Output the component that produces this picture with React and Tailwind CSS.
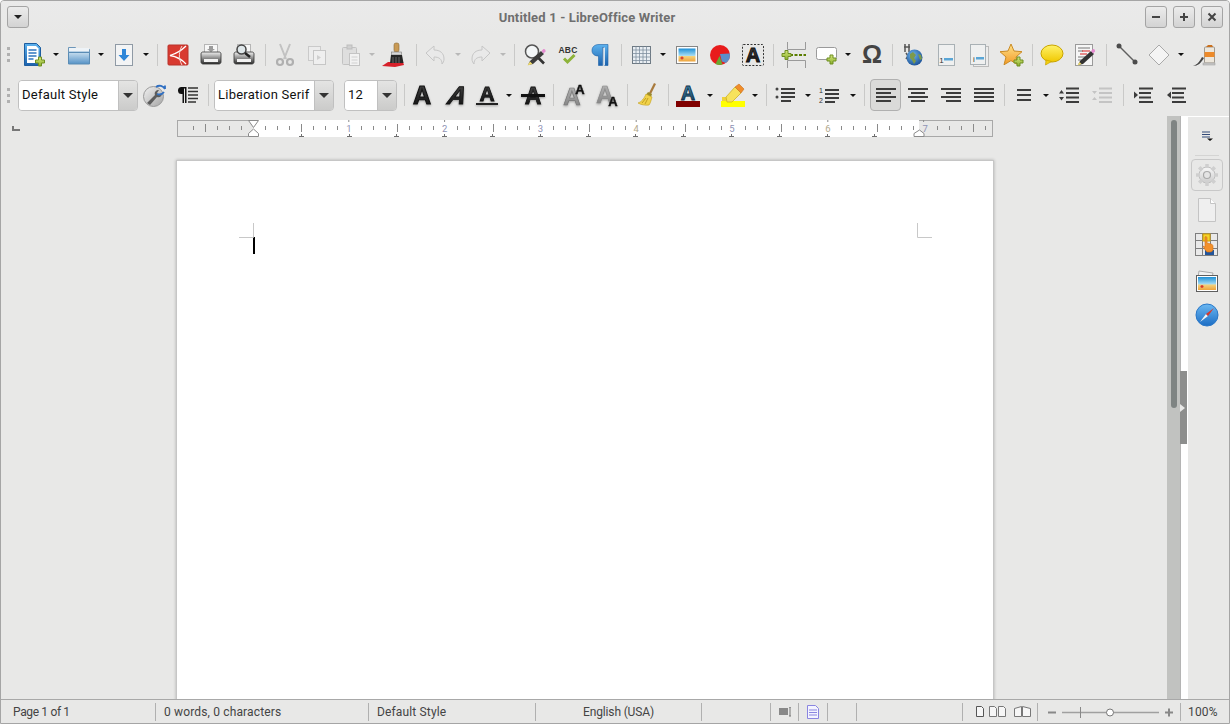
import React from "react";

const S = ({ children, w = 24, h = 24, className = "" }) => (
  <svg width={w} height={h} viewBox={`0 0 ${w} ${h}`} className={`shrink-0 overflow-visible ${className}`}>{children}</svg>
);

const Defs = () => (
  <svg className="absolute w-0 h-0">
    <defs>
      <linearGradient id="gBlue" x1="0" y1="0" x2="0" y2="1"><stop offset="0" stopColor="#5db2ee"/><stop offset="1" stopColor="#1b62ad"/></linearGradient>
      <linearGradient id="gFolder" x1="0" y1="0" x2="0" y2="1"><stop offset="0" stopColor="#c5dcee"/><stop offset="1" stopColor="#5592c6"/></linearGradient>
      <linearGradient id="gGreen" x1="0" y1="0" x2="0" y2="1"><stop offset="0" stopColor="#d4e67a"/><stop offset="1" stopColor="#8bb02d"/></linearGradient>
      <linearGradient id="gPrint" x1="0" y1="0" x2="0" y2="1"><stop offset="0" stopColor="#f2f2f2"/><stop offset="0.5" stopColor="#8e8e8e"/><stop offset="1" stopColor="#2d2d2d"/></linearGradient>
      <linearGradient id="gSky" x1="0" y1="0" x2="0" y2="1"><stop offset="0" stopColor="#1d8fd6"/><stop offset="0.55" stopColor="#a6dcf2"/><stop offset="0.6" stopColor="#f4d27c"/><stop offset="1" stopColor="#eda33c"/></linearGradient>
      <linearGradient id="gA" x1="0" y1="0" x2="0" y2="1"><stop offset="0" stopColor="#4a4a4a"/><stop offset="1" stopColor="#0c0c0c"/></linearGradient>
      <linearGradient id="gAG" x1="0" y1="0" x2="0" y2="1"><stop offset="0" stopColor="#bcbcbc"/><stop offset="1" stopColor="#7c7c7c"/></linearGradient>
      <linearGradient id="gAB" x1="0" y1="0" x2="0" y2="1"><stop offset="0" stopColor="#4fa3c9"/><stop offset="1" stopColor="#0f2f4a"/></linearGradient>
      <linearGradient id="gYel" x1="0" y1="0" x2="0" y2="1"><stop offset="0" stopColor="#fff26a"/><stop offset="1" stopColor="#f0c800"/></linearGradient>
      <linearGradient id="gStar" x1="0" y1="0" x2="0" y2="1"><stop offset="0" stopColor="#ffe28a"/><stop offset="1" stopColor="#f29a26"/></linearGradient>
      <radialGradient id="gGlobe" cx="0.4" cy="0.35" r="0.7"><stop offset="0" stopColor="#6fb4ea"/><stop offset="1" stopColor="#1a4f95"/></radialGradient>
      <linearGradient id="gComp" x1="0" y1="0" x2="0" y2="1"><stop offset="0" stopColor="#6bb8f2"/><stop offset="1" stopColor="#1c6dc4"/></linearGradient>
      <linearGradient id="gGear" x1="0" y1="0" x2="0" y2="1"><stop offset="0" stopColor="#f5f5f5"/><stop offset="1" stopColor="#cfcfcf"/></linearGradient>
      <linearGradient id="gWr" x1="0" y1="0" x2="1" y2="1"><stop offset="0" stopColor="#f2f2f2"/><stop offset="1" stopColor="#a4a4a4"/></linearGradient>
    </defs>
  </svg>
);

const Plus = ({ x = 14, y = 14 }) => (
  <path transform={`translate(${x} ${y})`} d="M3 0h3v3h3v3H6v3H3V6H0V3h3z" fill="url(#gGreen)" stroke="#6f8f22" strokeWidth="1" />
);

const NewDoc = () => (
  <S>
    <path d="M2.500 .5h12l4 4v18h-16z" fill="url(#gBlue)" stroke="#1d5d9f" />
    <path d="M5 3h9l2.500 2.500V20H5z" fill="#fff" />
    <path d="M6.500 7h8M6.500 10h8M6.500 13h8M6.500 16h5" stroke="#2f76bf" strokeWidth="1.400" />
    <Plus x={13.500} y={14} />
  </S>
);
const Folder = () => (
  <S>
    <path d="M1.500 4.500h7l2 2h12v14h-21z" fill="#b9d1e5" stroke="#6d96b9" />
    <rect x="2" y="5" width="20" height="3" fill="#eef3f7" />
    <path d="M1.500 9.500h21v11.500h-21z" fill="url(#gFolder)" stroke="#5a8cb5" />
  </S>
);
const Save = () => (
  <S>
    <rect x="3.500" y="1.500" width="17" height="21" fill="#f3f4f5" stroke="#8f9aa5" />
    <path d="M10 6h4v6h3.500L12 18l-5.500-6H10z" fill="#2e86d8" />
  </S>
);
const Pdf = () => (
  <S>
    <rect x="2" y="2" width="20" height="20" rx="1" fill="#d83a30" stroke="#b8322a" />
    <path d="M20 3C15 8 9 11 4 12.500c6 1 12 4 16 8.500" fill="none" stroke="#fff" strokeWidth="1.300" />
    <path d="M16 3C13 8 12 15 16 22" fill="none" stroke="#f6d5d2" strokeWidth="1" />
  </S>
);
const Printer = ({ mag }) => (
  <S>
    <rect x="5.500" y="1.500" width="13" height="10" fill="#f7f7f7" stroke="#b5b5b5" />
    {!mag && <path d="M10 3h4v3h2l-4 3-4-3h2z" fill="#9a9a9a" />}
    <path d="M2 11c0-1.500 1-2 2-2h16c1 0 2 .5 2 2v8c0 1-1 2-2 2H4c-1 0-2-1-2-2z" fill="url(#gPrint)" stroke="#333" strokeWidth=".8" />
    <rect x="5" y="16" width="14" height="3" fill="#f2f2f2" />
    {mag && <>
      <circle cx="9.500" cy="6.500" r="4.500" fill="#dfe7ea" stroke="#444" strokeWidth="1.500" />
      <path d="M13 10l5 4" stroke="#222" strokeWidth="2.400" />
    </>}
  </S>
);
const Cut = () => (
  <S>
    <g stroke="#c2c2c2" fill="none">
      <path d="M7 1l6 15M17 1l-6 15" strokeWidth="2" />
      <circle cx="7" cy="19" r="3" strokeWidth="2.200" stroke="#b0b0b0" />
      <circle cx="17" cy="19" r="3" strokeWidth="2.200" stroke="#b0b0b0" />
    </g>
  </S>
);
const Copy = () => (
  <S>
    <rect x="3.500" y="3.500" width="12" height="14" fill="#ececec" stroke="#cacaca" />
    <rect x="8.500" y="7.500" width="12" height="14" fill="#efefef" stroke="#c6c6c6" />
    <path d="M12 12l4 2.500-4 2.500z" fill="#cfcfcf" />
  </S>
);
const Paste = () => (
  <S>
    <rect x="3.500" y="4.500" width="14" height="17" rx="1" fill="#dedede" stroke="#c2c2c2" />
    <rect x="8" y="2" width="5" height="4" fill="#d0d0d0" stroke="#bdbdbd" />
    <rect x="10.500" y="10.500" width="10" height="12" fill="#f2f2f2" stroke="#c4c4c4" />
    <path d="M12.500 14h6M12.500 17h6M12.500 20h6" stroke="#d0d0d0" />
  </S>
);
const Brush = () => (
  <S>
    <path d="M-1 23l6-4 15 0 1 3-9 2z" fill="#d6202a" />
    <rect x="11" y="0" width="5" height="9" rx="2" fill="#c99a55" stroke="#8a6a35" strokeWidth=".6" />
    <rect x="8.500" y="9" width="10" height="3" fill="#d8d8d8" stroke="#777" strokeWidth=".6" />
    <path d="M8 12h11l1.500 8H7z" fill="#262626" />
    <path d="M10 14v6M13 14v6M16 14v6" stroke="#666" />
  </S>
);
const Undo = ({ flip }) => (
  <S className={flip ? "-scale-x-100" : ""}>
    <path d="M3 10l8-7v4c6 0 10 3 10 9 0 2-1 4-2 5 0-5-3-7-8-7v4z" fill="#e9e9e9" stroke="#c6c6c6" />
  </S>
);
const Find = () => (
  <S>
    <circle cx="9" cy="8.500" r="6.500" fill="#f3f6f7" stroke="#555" strokeWidth="1.500" />
    <path d="M14 13.500l7 7" stroke="#333" strokeWidth="2.600" />
    <path d="M5 22l2-4 11-10 3 3-11 10z" fill="#3b3b3b" />
    <path d="M18.500 8l2-2c1-.5 2.500 1 2 2.500l-2 2z" fill="#e48bd0" />
    <path d="M4.500 22.500l2.500-4 2.500 2.500z" fill="#f1dc6a" />
  </S>
);
const Spell = () => (
  <S>
    <text x="12" y="9.500" textAnchor="middle" fontFamily="Liberation Sans" fontWeight="700" fontSize="8.500" fill="#333" letterSpacing=".2">ABC</text>
    <path d="M8 15.500l3.500 3.500 7-7" fill="none" stroke="#8db33a" strokeWidth="3" />
  </S>
);
const Pilcrow = () => (
  <S>
    <path d="M19 1.500H10C5.500 1.500 3 4 3 7.500S5.500 13 9.500 13v9.500h4V4.500h1.500v18h4z" fill="url(#gBlue)" stroke="#1b5fa6" strokeWidth=".6" />
    <path d="M14.800 4.500h1v18h-1z" fill="#fff" />
  </S>
);
const TableI = () => (
  <S>
    <rect x="3.500" y="3.500" width="18" height="17" fill="#e9eef3" stroke="#6e7a84" />
    <path d="M3.500 7h18M3.500 10.500h18M3.500 14h18M3.500 17.500h18M7 3.500v17M10.500 3.500v17M14 3.500v17M17.500 3.500v17" stroke="#7f8f9f" strokeWidth=".8" />
  </S>
);
const Pic = () => (
  <S>
    <rect x="1.500" y="3.500" width="21" height="17" fill="#fff" stroke="#858585" />
    <rect x="3.500" y="5.500" width="17" height="13" fill="url(#gSky)" />
    <path d="M7 13.500v3M5.500 15h3" stroke="#d8392c" strokeWidth="1.300" />
  </S>
);
const Chart = () => (
  <S>
    <circle cx="12" cy="12" r="10" fill="#e81c1c" />
    <path d="M12 11l9.900 -.5a10 10 0 0 1-4 9.500l-4-1.500z" fill="#5b8fc9" />
    <path d="M11.500 13l3 8.600a10 10 0 0 1-7 -.5z" fill="#6aa833" />
  </S>
);
const BigA = ({ fill = "url(#gA)", size = 24, y = 20, stroke = "#111", italic = false, x = 12, sw = 0.9 }) => (
  <text x={x} y={y} textAnchor="middle" fontFamily="Liberation Sans" fontWeight="700" fontStyle={italic ? "italic" : "normal"} fontSize={size} fill={fill} stroke={stroke} strokeWidth={sw}>A</text>
);
const shadow = "drop-shadow-[0_1px_1px_rgba(0,0,0,0.3)]";
const TextBox = () => (
  <S>
    <rect x="1.500" y="1.500" width="21" height="21" rx="1" fill="none" stroke="#333" strokeDasharray="2 1.500" />
    <BigA size={20} y={19} />
  </S>
);
const PageBreak = () => (
  <S h={26}>
    <path d="M5.500 0v7.500h18V0M5.500 26v-7.500h18V26" fill="none" stroke="#9a9a9a" />
    <path d="M8 13h16" stroke="#5a7d00" strokeWidth="2" strokeDasharray="3 1.500" />
    <Plus x={0} y={8.500} />
  </S>
);
const Field = () => (
  <S>
    <rect x="2.500" y="4.500" width="20" height="12" rx="2" fill="#fff" stroke="#9a9a9a" />
    <Plus x={13} y={12} />
  </S>
);
const Omega = () => (
  <span className="font-['Liberation_Sans'] font-bold text-[25px] leading-none text-[#444]">Ω</span>
);
const Hyper = () => (
  <S>
    <path d="M4 1v8M8 1v8M3 4h6M5 10l4 6M9 10l-4 6" stroke="#555" strokeWidth="1.500" />
    <circle cx="13.500" cy="14.500" r="8" fill="url(#gGlobe)" />
    <path d="M9 11l3-2 3 3-2 3 2 3-2 3-2-4-2-2zM17 11l3 1 1 4-2 1z" fill="#7d9a4a" />
  </S>
);
const Note = ({ end }) => (
  <S>
    {end && <rect x="6.500" y="3.500" width="15" height="20" fill="#ececec" stroke="#bbb" />}
    <rect x={end ? 3.500 : 4.500} y={1.500} width={end ? 15 : 16} height={end ? 20 : 21} fill="#eff0f0" stroke="#a9b1b5" />
    <text x={end ? 7 : 7.500} y={end ? 19 : 20} textAnchor="middle" fontFamily="Liberation Sans" fontSize="8" fill="#333">{end ? "i" : "1"}</text>
    <rect x={end ? 9 : 10} y={end ? 14 : 15} width={end ? 8 : 9} height="2.500" fill="#5aa6d6" />
  </S>
);
const Star = () => (
  <S>
    <path d="M11 1l3 7 8 .7-6 5.300 2 7.800-7-4.200-7 4.200 2-7.800-6-5.300 8-.7z" fill="url(#gStar)" stroke="#c98a24" />
    <Plus x={14} y={14} />
  </S>
);
const Bubble = () => (
  <S>
    <ellipse cx="12" cy="10.500" rx="11" ry="8.500" fill="url(#gYel)" stroke="#c9a400" />
    <path d="M6 17l-.5 5 6-3.500z" fill="#f3cf10" stroke="#c9a400" strokeWidth=".7" />
  </S>
);
const Track = () => (
  <S>
    <rect x="2.500" y="1.500" width="17" height="21" fill="#f6f6f6" stroke="#9a9a9a" />
    <path d="M5 5h12M5 8h5M5 14h7M5 17h4" stroke="#777" />
    <path d="M9 8h8M7 11h7" stroke="#d92020" />
    <path d="M5 22l2-4 11-10 3 3-11 10z" fill="#333" />
    <path d="M18 8l2-2c1-.5 2.500 1 2 2.500l-2 2z" fill="#e48bd0" />
    <path d="M4.500 22.500l2-3.500 2 2z" fill="#f1dc6a" />
  </S>
);
const LineI = () => (
  <S>
    <path d="M4 3l16 16" stroke="#5f5f5f" strokeWidth="1.500" />
    <circle cx="4" cy="3" r="2.500" fill="#4c4c4c" />
    <circle cx="20" cy="19" r="2.500" fill="#4c4c4c" />
  </S>
);
const Diamond = () => (
  <S>
    <path d="M12 2l10 10-10 10L2 12z" fill="#f4f4f4" stroke="#a9a9a9" />
  </S>
);
const Draw = () => (
  <S>
    <rect x="11.500" y="4" width="10" height="16" rx="1" fill="#ede7dc" stroke="#a09a90" />
    <rect x="11.500" y="9" width="10" height="5" fill="#ed8a2a" />
    <path d="M13 4l2-2 4 0 1 2z" fill="#c9701e" />
    <path d="M0 23c3-1 6-3 9-9l2 1c-3 5-6 8-11 8z" fill="#444" />
    <rect x="10" y="20" width="12" height="2" fill="#c8c8c8" stroke="#999" strokeWidth=".5" />
  </S>
);
const Update = () => (
  <S>
    <circle cx="10.500" cy="13.500" r="10" fill="url(#gWr)" stroke="#9a9a9a" />
    <path d="M4 20l8-8c-1-3 1-5 4-5l-2 3 2 2 3-2c0 3-2 5-5 4l-7 8z" fill="#5c5c5c" />
    <path d="M13 4a6 6 0 0 1 9 2M22 6V2.500M21 9a6 6 0 0 1-7 2" fill="none" stroke="#2f6fc2" strokeWidth="1.800" />
  </S>
);
const ParaList = () => (
  <S>
    <path d="M8.500 4H5.500a3.500 3.500 0 0 0 0 7h1v9h1.500V5.500h1V20h1.500V4z" fill="#111" />
    <path d="M12 5h10M12 8.500h10M12 12h10M12 15.500h10M12 19h8" stroke="#333" strokeWidth="1.500" />
  </S>
);
const Bold = () => <S className={shadow}><BigA size={25} y={21} sw={1.100} /></S>;
const Italic = () => (
  <S className={shadow}>
    <g transform="translate(4 0) skewX(-12)"><BigA size={25} y={21} italic sw={.9} /></g>
  </S>
);
const Under = () => (
  <S className={shadow}>
    <BigA size={21} y={18} sw={.8} />
    <rect x="1" y="20" width="22" height="2" fill="#222" />
  </S>
);
const Strike = () => (
  <S className={shadow}>
    <BigA size={23} y={21} sw={.8} />
    <rect x="0" y="11" width="24" height="3" fill="#111" />
  </S>
);
const Grow = () => (
  <S className={shadow}>
    <BigA size={24} y={22} x={10} fill="url(#gAG)" stroke="#777" sw={.7} />
    <text x="18" y="11" textAnchor="middle" fontFamily="Liberation Sans" fontWeight="700" fontSize="13" fill="#111" stroke="#111" strokeWidth=".4">A</text>
  </S>
);
const Shrink = () => (
  <S className={shadow}>
    <BigA size={24} y={20} x={10} fill="url(#gAG)" stroke="#888" sw={.7} />
    <text x="18" y="23" textAnchor="middle" fontFamily="Liberation Sans" fontWeight="700" fontSize="13" fill="#111" stroke="#111" strokeWidth=".4">A</text>
  </S>
);
const Clear = () => (
  <S>
    <path d="M19 0l2 1-5 10-2-1z" fill="#a87a3d" />
    <path d="M13 9l4 2-1 3-5-2z" fill="#9a8b2c" />
    <path d="M11 11l6 3c-1 4-2 7-3 8-3 .5-8 0-11-2 3-1 6-4 8-9z" fill="#f1d24a" stroke="#c3a020" strokeWidth=".6" />
    <path d="M7 20l4-5M10 21l3-6" stroke="#c3a020" />
  </S>
);
const FontColor = () => (
  <S>
    <BigA size={20} y={17} fill="url(#gAB)" stroke="#0f2f4a" sw={.8} />
    <rect x="0" y="18" width="24" height="6" fill="#800000" />
  </S>
);
const Highlight = () => (
  <S>
    <rect x="0" y="18" width="24" height="6" fill="#ffff00" />
    <rect x="1" y="14" width="7" height="4" fill="#eed23a" />
    <path d="M5 14l9-10 6 6-9 9H6z" fill="#f7e25c" stroke="#c7a91a" strokeWidth=".7" />
    <path d="M14 4l4-3 5 5-3 4z" fill="#f08d2a" stroke="#c9701e" strokeWidth=".6" />
  </S>
);
const Bullets = () => (
  <S>
    <circle cx="3" cy="6" r="1.500" fill="#444" /><circle cx="3" cy="14" r="1.500" fill="#444" />
    <path d="M7 6h14M7 10h14M7 14h14M7 18h10" stroke="#3c3c3c" strokeWidth="1.800" />
  </S>
);
const Numbers = () => (
  <S>
    <text x="3" y="10" textAnchor="middle" fontFamily="Liberation Sans" fontSize="7" fill="#333">1</text>
    <text x="3" y="20" textAnchor="middle" fontFamily="Liberation Sans" fontSize="7" fill="#333">2</text>
    <path d="M7 7h14M7 11h14M7 15h14M7 19h10" stroke="#3c3c3c" strokeWidth="1.800" />
  </S>
);
const Align = ({ d }) => (
  <S><path d={d} stroke="#3c3c3c" strokeWidth="2" fill="none" /></S>
);
const LEFT = "M2 6h20M2 10h15M2 14h20M2 18h15";
const CENTER = "M2 6h20M5 10h14M2 14h20M5 18h14";
const RIGHT = "M2 6h20M7 10h15M2 14h20M7 18h15";
const JUST = "M2 6h20M2 10h20M2 14h20M2 18h20";
const Spacing = () => <S><path d="M5 7h14M5 12h14M5 17h14" stroke="#3c3c3c" strokeWidth="2.200" /></S>;
const ParaInc = ({ off }) => (
  <S>
    <path d="M9 5.500h13M9 10h13M9 14.500h13M9 19h13" stroke={off ? "#c4c4c4" : "#3c3c3c"} strokeWidth="2" />
    <path d={off ? "M2 8h5L4.500 11zM2 17h5l-2.500-3z" : "M2 10.500h5L4.500 7zM2 14h5l-2.500 3.500z"} fill={off ? "#c4c4c4" : "#3c3c3c"} />
  </S>
);
const Indent = ({ out }) => (
  <S>
    <path d="M7 5.500h14M7 10h12M7 14.500h12M7 19h14" stroke="#3c3c3c" strokeWidth="1.900" />
    <path d={out ? "M6 8.500v7l-4-3.500z" : "M2 8.500v7l4-3.500z"} fill="#3c3c3c" />
  </S>
);

const Cell = ({ w, children, extra = "" }) => (
  <div className={`${w} ${extra} shrink-0 flex items-center justify-center`}>{children}</div>
);
const Arrow = ({ off }) => (
  <div className={`w-0 h-0 border-x-[3px] border-x-transparent border-t-[3px] ${off ? "border-t-[#b8b8b8]" : "border-t-[#111]"}`} />
);
const Sep = () => <div className="w-px h-[22px] bg-[#c9c9c8]" />;
const Grip = () => (
  <div className="w-[18px] shrink-0 pl-[7px] flex flex-col gap-[3px]">
    <div className="w-[3px] h-[3px] bg-[#b0b0b0]" />
    <div className="w-[3px] h-[3px] bg-[#b0b0b0]" />
    <div className="w-[3px] h-[3px] bg-[#b0b0b0]" />
  </div>
);
const Combo = ({ outer, inner, text }) => (
  <div className={`${outer} h-[31px] shrink-0 flex rounded-[4px] border border-[#c0c0c0] overflow-hidden`}>
    <div className={`${inner} bg-white flex items-center pl-[3px] text-[13px] tracking-[0.25px] text-[#111] overflow-hidden whitespace-nowrap`}>{text}</div>
    <div className="flex-1 border-l border-[#c0c0c0] bg-linear-to-b from-[#e4e4e3] to-[#cbcbca] flex items-center justify-center">
      <div className="w-0 h-0 border-x-[5px] border-x-transparent border-t-[5px] border-t-[#333]" />
    </div>
  </div>
);
const WinBtn = ({ children }) => (
  <div className="w-[22px] h-[22px] rounded-[3px] border border-[#a4a4a4] bg-linear-to-b from-[#ececec] to-[#d3d3d3] flex items-center justify-center">{children}</div>
);

const Ruler = () => {
  const ticks = [];
  for (let x = 76 - 60; x < 816; x += 12) {
    const k = Math.round((x - 76) / 12);
    if (k % 8 === 0) continue;
    const half = ((k % 4) + 4) % 4 === 0;
    ticks.push(<path key={x} d={half ? `M${x + 0.5} 4v8` : `M${x + 0.5} 6v4`} stroke="#8a8a8a" strokeWidth="1" />);
  }
  const tabs = [];
  for (let i = 1; i < 14; i++) {
    const x = 76 + Math.round(i * 47.8);
    tabs.push(<path key={i} d={`M${x + 0.5} 14v3M${x - 2} 16.500h5`} stroke="#6e6e6e" strokeWidth="1" />);
  }
  return (
    <svg width="816" height="17" viewBox="0 0 816 17" className="block shrink-0">
      <rect x=".5" y=".5" width="815" height="16" fill="#e8e8e7" stroke="#a8a8a8" />
      <rect x="76" y="0" width="666" height="17" fill="#fff" />
      {ticks}
      {tabs}
      <path d="M71.500 .5h10l-5 7zM71.500 16.500h10v-3l-5-4.500-5 4.500z" fill="#fff" stroke="#8a8a8a" />
      <path d="M737 16.500h10v-3l-4.500-3.500-5.500 3.500z" fill="#fff" stroke="#8a8a8a" />
      {[1, 2, 3, 4, 5, 6, 7].map((n) => (
        <g key={n}>
          <path d={`M${76 + n * 95.800} 0v2`} stroke="#8a8a8a" />
          <text x={76 + n * 95.800 + (n === 7 ? 1.500 : 0)} y="12" textAnchor="middle" fontFamily="Roboto" fontSize="9.500" fill={n === 6 || n === 4 ? "#b3a98c" : "#8f93b5"}>{n}</text>
        </g>
      ))}
    </svg>
  );
};

const Gear = () => (
  <S>
    <circle cx="12" cy="12" r="8" fill="url(#gGear)" stroke="#bdbdbd" strokeWidth="1" />
    <path d="M12 1v4M12 19v4M1 12h4M19 12h4M4.200 4.200l3 3M16.800 16.800l3 3M4.200 19.800l3-3M16.800 7.200l3-3" stroke="#cfcfcf" strokeWidth="3.500" />
    <circle cx="12" cy="12" r="6.500" fill="url(#gGear)" />
    <circle cx="12" cy="12" r="3.500" fill="#e4e4e4" stroke="#a9a9a9" strokeWidth="1.200" />
  </S>
);
const SideDoc = () => (
  <S>
    <path d="M3.500 .5h12l5 5v18h-17z" fill="#efefef" stroke="#c4c4c4" />
    <path d="M15.500 .5v5h5" fill="#fff" stroke="#c4c4c4" />
  </S>
);
const Styles = () => (
  <S>
    <rect x=".5" y=".5" width="22" height="22" fill="#e9e9e9" stroke="#7e7e7e" />
    <path d="M7.500 .5v22M15.500 .5v22M.5 7.500h22M.5 15.500h22" stroke="#7e7e7e" />
    <rect x="8" y="1" width="7" height="7" fill="#f2d32b" stroke="#d5a000" />
    <rect x="10" y="17" width="9" height="5" fill="#23559a" />
    <path d="M10 4c1-1 2 0 2 1v5l4 1c2 .5 2 2 2 3v3c-1 2-2 2-4 2h-2c-2-2-3-4-4-6l2 1z" fill="#f3912b" stroke="#d46f12" strokeWidth=".6" />
  </S>
);
const Gallery = () => (
  <S>
    <path d="M4 2l14 2-1 5H3z" fill="#f1f1f1" stroke="#aaa" />
    <rect x="1.500" y="6.500" width="21" height="16" fill="#fff" stroke="#5e5e5e" />
    <rect x="3" y="8" width="18" height="13" fill="url(#gSky)" />
    <path d="M7 16v3M5.500 17.500h3" stroke="#d8392c" strokeWidth="1.300" />
  </S>
);
const Compass = () => (
  <S>
    <circle cx="12" cy="12" r="11" fill="url(#gComp)" stroke="#2a78c8" />
    <path d="M5 19l6-8 2 2z" fill="#f4f4f4" />
    <path d="M19 5l-8 6 2 2z" fill="#d8392c" />
  </S>
);

export default function App() {
  return (
    <div className="relative w-[1230px] h-[724px] flex flex-col overflow-hidden bg-[#e8e8e7] border border-[#a5a5a5] rounded-t-[4px] font-['Roboto',sans-serif] text-[#333]">
      <Defs />
      {/* title bar */}
      <div className="h-[34px] shrink-0 flex items-start px-[6px] pt-[5px] bg-linear-to-b from-[#eaeaea] to-[#e8e8e7]">
        <WinBtn>
          <div className="w-0 h-0 border-x-[4px] border-x-transparent border-t-[4px] border-t-[#222]" />
        </WinBtn>
        <div className="flex-1 text-center text-[13px] leading-[24px] font-bold text-[#6f6f6f] tracking-[0.15px]">Untitled 1 - LibreOffice Writer</div>
        <div className="flex gap-[6px]">
          <WinBtn><div className="w-[8px] h-[2px] bg-[#444]" /></WinBtn>
          <WinBtn><svg width="10" height="10"><path d="M5 1v8M1 5h8" stroke="#444" strokeWidth="2" /></svg></WinBtn>
          <WinBtn><svg width="10" height="10"><path d="M1.500 1.500l7 7M8.500 1.500l-7 7" stroke="#444" strokeWidth="2" /></svg></WinBtn>
        </div>
      </div>

      {/* standard toolbar */}
      <div className="h-[39px] shrink-0 -ml-px flex items-center">
        <Grip />
        <Cell w="w-[32px]"><NewDoc /></Cell>
        <Cell w="w-[12px]"><Arrow /></Cell>
        <Cell w="w-[34px]"><Folder /></Cell>
        <Cell w="w-[10px]"><Arrow /></Cell>
        <Cell w="w-[36px]"><Save /></Cell>
        <Cell w="w-[8px]"><Arrow /></Cell>
        <Cell w="w-[14px]"><Sep /></Cell>
        <Cell w="w-[28px]"><Pdf /></Cell>
        <Cell w="w-[38px]"><Printer /></Cell>
        <Cell w="w-[28px]"><Printer mag /></Cell>
        <Cell w="w-[14px]"><Sep /></Cell>
        <Cell w="w-[26px]"><Cut /></Cell>
        <Cell w="w-[38px]"><Copy /></Cell>
        <Cell w="w-[30px]"><Paste /></Cell>
        <Cell w="w-[12px]"><Arrow off /></Cell>
        <Cell w="w-[34px]"><Brush /></Cell>
        <Cell w="w-[8px]"><Sep /></Cell>
        <Cell w="w-[30px]"><Undo /></Cell>
        <Cell w="w-[16px]"><Arrow off /></Cell>
        <Cell w="w-[30px]"><Undo flip /></Cell>
        <Cell w="w-[14px]"><Arrow off /></Cell>
        <Cell w="w-[8px]"><Sep /></Cell>
        <Cell w="w-[34px]"><Find /></Cell>
        <Cell w="w-[32px]"><Spell /></Cell>
        <Cell w="w-[34px]"><Pilcrow /></Cell>
        <Cell w="w-[6px]"><Sep /></Cell>
        <Cell w="w-[34px]"><TableI /></Cell>
        <Cell w="w-[10px]"><Arrow /></Cell>
        <Cell w="w-[38px]"><Pic /></Cell>
        <Cell w="w-[28px]"><Chart /></Cell>
        <Cell w="w-[38px]"><TextBox /></Cell>
        <Cell w="w-[2px]"><Sep /></Cell>
        <Cell w="w-[40px]"><PageBreak /></Cell>
        <Cell w="w-[24px]"><Field /></Cell>
        <Cell w="w-[20px]"><Arrow /></Cell>
        <Cell w="w-[28px]"><Omega /></Cell>
        <Cell w="w-[12px]"><Sep /></Cell>
        <Cell w="w-[30px]"><Hyper /></Cell>
        <Cell w="w-[36px]"><Note /></Cell>
        <Cell w="w-[30px]"><Note end /></Cell>
        <Cell w="w-[36px]"><Star /></Cell>
        <Cell w="w-[4px]"><Sep /></Cell>
        <Cell w="w-[36px]"><Bubble /></Cell>
        <Cell w="w-[30px]"><Track /></Cell>
        <Cell w="w-[12px]"><Sep /></Cell>
        <Cell w="w-[30px]"><LineI /></Cell>
        <Cell w="w-[34px]"><Diamond /></Cell>
        <Cell w="w-[10px]"><Arrow /></Cell>
        <Cell w="w-[38px]"><Draw /></Cell>
      </div>

      {/* formatting toolbar */}
      <div className="h-[40px] shrink-0 -ml-px pt-[2px] flex items-center">
        <Grip />
        <Combo outer="w-[120px]" inner="w-[99px]" text="Default Style" />
        <Cell w="w-[34px]"><Update /></Cell>
        <Cell w="w-[32px]"><ParaList /></Cell>
        <Cell w="w-[8px]"><Sep /></Cell>
        <div className="w-[2px] shrink-0" />
        <Combo outer="w-[120px]" inner="w-[99px]" text="Liberation Serif" />
        <div className="w-[10px] shrink-0" />
        <Combo outer="w-[53px]" inner="w-[32px]" text="12" />
        <Cell w="w-[14px]"><Sep /></Cell>
        <Cell w="w-[22px]"><Bold /></Cell>
        <Cell w="w-[46px]"><Italic /></Cell>
        <Cell w="w-[16px]"><Under /></Cell>
        <Cell w="w-[28px]"><Arrow /></Cell>
        <Cell w="w-[20px]"><Strike /></Cell>
        <Cell w="w-[20px]"><Sep /></Cell>
        <Cell w="w-[22px]"><Grow /></Cell>
        <div className="w-[7px] shrink-0" />
        <Cell w="w-[30px]"><Shrink /></Cell>
        <Cell w="w-[10px]"><Sep /></Cell>
        <Cell w="w-[30px]"><Clear /></Cell>
        <Cell w="w-[12px]"><Sep /></Cell>
        <Cell w="w-[28px]"><FontColor /></Cell>
        <Cell w="w-[16px]"><Arrow /></Cell>
        <Cell w="w-[30px]"><Highlight /></Cell>
        <Cell w="w-[14px]"><Arrow /></Cell>
        <Cell w="w-[8px]"><Sep /></Cell>
        <Cell w="w-[32px]"><Bullets /></Cell>
        <Cell w="w-[12px]"><Arrow /></Cell>
        <Cell w="w-[32px]"><Numbers /></Cell>
        <Cell w="w-[14px]"><Arrow /></Cell>
        <Cell w="w-[8px]"><Sep /></Cell>
        <div className="w-[2px] shrink-0" />
        <div className="w-[31px] h-[32px] shrink-0 rounded-[4px] border border-[#b0b0b0] bg-[#dadad9] flex items-center justify-center"><Align d={LEFT} /></div>
        <Cell w="w-[34px]"><Align d={CENTER} /></Cell>
        <Cell w="w-[32px]"><Align d={RIGHT} /></Cell>
        <Cell w="w-[34px]"><Align d={JUST} /></Cell>
        <Cell w="w-[6px]"><Sep /></Cell>
        <Cell w="w-[34px]"><Spacing /></Cell>
        <Cell w="w-[10px]"><Arrow /></Cell>
        <Cell w="w-[36px]"><ParaInc /></Cell>
        <Cell w="w-[30px]"><ParaInc off /></Cell>
        <Cell w="w-[12px]"><Sep /></Cell>
        <Cell w="w-[30px]"><Indent /></Cell>
        <Cell w="w-[36px]"><Indent out /></Cell>
      </div>

      {/* main */}
      <div className="flex-1 min-h-0 mt-[2px] -ml-px flex">
        <div className="w-[1167px] shrink-0 min-h-0 flex flex-col pt-[4px] overflow-hidden">
          <div className="h-[17px] shrink-0 flex items-center">
            <div className="w-[177px] shrink-0 pl-[12px]">
              <svg width="8" height="5" className="block"><path d="M1 0v4h7" fill="none" stroke="#777" strokeWidth="2" /></svg>
            </div>
            <Ruler />
          </div>
          <div className="flex-1 min-h-0 pl-[176px] pt-[23px]">
            <div className="w-[818px] h-[600px] bg-white border border-[#c6c6c6] shadow-[0_0_3px_rgba(0,0,0,0.25)] pl-[62px] pt-[62px]">
              <div className="flex justify-between w-[693px]">
                <svg width="15" height="15" className="shrink-0 block"><path d="M14.500 0v14.500H0" fill="none" stroke="#c8c8c8" /></svg>
                <svg width="15" height="15" className="shrink-0 block"><path d="M.5 0v14.500H15" fill="none" stroke="#c8c8c8" /></svg>
              </div>
              <div className="w-[2px] h-[17px] bg-black ml-[14px] -mt-px" />
            </div>
          </div>
        </div>
        <div className="w-[13px] shrink-0 bg-[#c1c2c0] pl-[4px] pt-[4px]">
          <div className="w-[6px] h-[288px] rounded-[3px] bg-[#7f8483]" />
        </div>
        <div className="w-[7px] shrink-0 bg-white border-l border-[#b4b4b4] pt-[255px]">
          <div className="-ml-px w-[7px] h-[73px] bg-[#8d8e8d] flex items-center">
            <div className="w-0 h-0 border-y-[4px] border-y-transparent border-l-[5px] border-l-[#e8e8e7]" />
          </div>
        </div>
        <div className="flex-1 border-l border-t border-white pr-[3px] flex flex-col items-center">
          <div className="h-[38px] flex items-center justify-center w-full">
            <svg width="12" height="10"><path d="M1 1h8M1 3.500h8M1 6h8" stroke="#334a78" strokeWidth="1" /><path d="M6 7.500h6l-3 2.500z" fill="#111" /></svg>
          </div>
          <div className="w-[24px] h-px bg-[#d4d4d3]" />
          <div className="mt-[3px] w-[32px] h-[32px] rounded-[4px] border border-[#c8c8c8] flex items-center justify-center"><Gear /></div>
          <div className="mt-[7px] h-[24px] flex items-center"><SideDoc /></div>
          <div className="mt-[11px] h-[24px] flex items-center"><Styles /></div>
          <div className="mt-[12px] h-[24px] flex items-center"><Gallery /></div>
          <div className="mt-[10px] h-[24px] flex items-center"><Compass /></div>
        </div>
      </div>

      {/* status bar */}
      <div className="h-[24px] shrink-0 -ml-px border-t border-[#a8a8a8] flex items-center text-[12px] tracking-[0.15px] text-[#444] bg-[#e8e8e7]">
        <div className="w-[155px] shrink-0 pl-[13px] tracking-[-0.35px]">Page 1 of 1</div>
        <div className="w-[213px] h-[18px] shrink-0 border-l border-[#b0b0b0] pl-[8px] flex items-center">0 words, 0 characters</div>
        <div className="w-[167px] h-[18px] shrink-0 border-l border-[#b0b0b0] pl-[8px] flex items-center">Default Style</div>
        <div className="w-[166px] h-[18px] shrink-0 border-l border-[#b0b0b0] tracking-[-0.15px] flex items-center justify-center">English (USA)</div>
        <div className="w-[69px] h-[18px] shrink-0 border-l border-[#b0b0b0]" />
        <div className="w-[28px] h-[18px] shrink-0 border-l border-[#b0b0b0] flex items-center justify-center">
          <svg width="12" height="10" className="shrink-0"><rect y="1" width="9" height="7" fill="#888" /><path d="M10 0h2M11 0v9M10 9h2" stroke="#777" /></svg>
        </div>
        <div className="w-[29px] h-[18px] shrink-0 border-l border-[#b0b0b0] flex items-center justify-center">
          <svg width="14" height="14"><path d="M1.500 .5h8l3 3v10h-11z" fill="#f4f4ff" stroke="#8a85e0" /><path d="M3 5h8M3 7.500h8M3 10h8" stroke="#8a85e0" /></svg>
        </div>
        <div className="w-[29px] h-[18px] shrink-0 border-l border-[#b0b0b0]" />
        <div className="w-[106px] h-[18px] shrink-0 border-l border-[#b0b0b0]" />
        <div className="w-[75px] h-[18px] shrink-0 border-l border-[#b0b0b0] pl-[12px] flex items-center gap-[4px]">
          <svg width="10" height="11" className="shrink-0"><path d="M1.500 .5h5l2 2v8h-7z" fill="#f6f6f6" stroke="#555" /></svg>
          <svg width="17" height="11" className="shrink-0"><path d="M.5 .5h5l2 2v8h-7zM9.500 .5h5l2 2v8h-7z" fill="#f6f6f6" stroke="#777" /></svg>
          <svg width="17" height="11" className="shrink-0 ml-[4px]"><path d="M.5 2.500l7-2v10h-7zM8.500 .5l8 2v8h-8z" fill="#f6f6f6" stroke="#777" /></svg>
        </div>
        <div className="w-[143px] h-[18px] shrink-0 border-l border-[#b0b0b0] pl-[10px] flex items-center">
          <svg width="130" height="14" className="shrink-0"><path d="M14 7.500h97" stroke="#a0a0a0" strokeWidth="1.500" /><path d="M0 7.500h8" stroke="#888" strokeWidth="2" /><path d="M32.500 2v11" stroke="#888" /><circle cx="62" cy="7.500" r="3.500" fill="#fff" stroke="#777" /><path d="M117 7.500h8M121 3.500v8" stroke="#888" strokeWidth="2" /></svg>
        </div>
        <div className="flex-1 h-[18px] border-l border-[#b0b0b0] pl-[7px] flex items-center">100%</div>
      </div>
    </div>
  );
}
